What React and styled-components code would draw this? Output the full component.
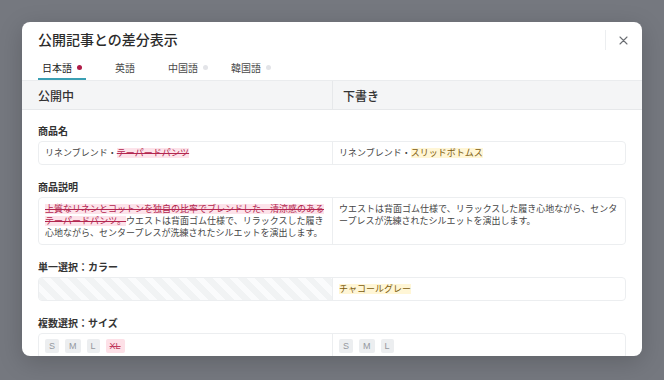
import React from 'react'
import styled, { createGlobalStyle } from 'styled-components'

const GlobalStyle = createGlobalStyle`
    html, body {
        margin: 0;
        width: 664px;
        height: 380px;
        overflow: hidden;
    }
    body {
        font-family: "Liberation Sans", "Noto Sans CJK JP", sans-serif;
        color: #333;
    }
    * {
        box-sizing: border-box;
    }
`

const Backdrop = styled.div`
    width: 664px;
    height: 380px;
    padding: 22px;
    background-color: #75787f;
`
const Dialog = styled.div`
    width: 620px;
    height: 334px;
    background-color: #fff;
    border-radius: 8px;
    display: flex;
    flex-direction: column;
    overflow: hidden;
    box-shadow: 0 6px 24px rgba(0, 0, 0, 0.18);
`
const DialogHead = styled.div`
    padding: 7px 8px 0 16px;
`
const TitleRow = styled.div`
    display: flex;
    align-items: center;
    height: 22px;
`
const Title = styled.h1`
    flex: 1;
    margin: 0;
    font-size: 14px;
    line-height: 20px;
    font-weight: 500;
    color: #2b2b2b;
`
const Separator = styled.div`
    width: 1px;
    height: 20px;
    background-color: #eceef0;
    margin-right: 6px;
`
const CloseButton = styled.button`
    width: 22px;
    height: 22px;
    padding: 0;
    border: 0;
    background: none;
    display: flex;
    align-items: center;
    justify-content: center;
    cursor: pointer;
`
const TabList = styled.div`
    display: flex;
    gap: 15px;
    margin-top: 4px;
    height: 25px;
`
const Tab = styled.div`
    width: 48px;
    display: flex;
    align-items: center;
    justify-content: center;
    gap: 5px;
    font-size: 10px;
    color: ${p => p.$active ? '#222' : '#4a4a4a'};
    border-bottom: 2px solid ${p => p.$active ? '#3a9fb3' : 'transparent'};
    padding-top: 1px;
`
const Dot = styled.span`
    width: 5px;
    height: 5px;
    border-radius: 50%;
    background-color: ${p => p.$color};
`
const ColumnHead = styled.div`
    display: grid;
    grid-template-columns: 1fr 1fr;
    padding: 0 16px;
    height: 30px;
    background-color: #f4f5f6;
    border-top: 1px solid #eaecee;
    border-bottom: 1px solid #e6e8ea;
`
const ColumnTitle = styled.div`
    display: flex;
    align-items: center;
    font-size: 12px;
    font-weight: 500;
    color: #333;
    & + & {
        border-left: 1px solid #e6e8ea;
        padding-left: 10px;
    }
`
const Body = styled.div`
    flex: 1;
    overflow: hidden;
    padding: 15px 16px;
`
const Section = styled.div`
    margin-bottom: 16px;
`
const Label = styled.div`
    font-size: 10px;
    line-height: 14px;
    font-weight: 600;
    color: #333;
    margin-bottom: 2px;
`
const DiffBox = styled.div`
    display: grid;
    grid-template-columns: 1fr 1fr;
    border: 1px solid #eceef0;
    border-radius: 4px;
    overflow: hidden;
`
const Cell = styled.div`
    padding: 5px 6px;
    font-size: 9px;
    line-height: 12px;
    color: #444;
    min-height: 22px;
    & + & {
        border-left: 1px solid #eceef0;
    }
    ${p => p.$empty && `
        background: repeating-linear-gradient(45deg, #f1f3f4 0 6px, #fafbfc 6px 12px);
    `}
`
const Del = styled.span`
    background-color: #fde3ea;
    color: #b3264f;
    text-decoration: line-through;
`
const Ins = styled.span`
    background-color: #fff6d6;
    color: #7c5a0b;
`
const Chips = styled.div`
    display: flex;
    gap: 6px;
`
const Chip = styled.span`
    height: 14px;
    padding: 0 4px;
    border-radius: 2px;
    display: inline-flex;
    align-items: center;
    font-size: 9px;
    background-color: ${p => p.$deleted ? '#fde0e7' : '#eceef0'};
    color: ${p => p.$deleted ? '#c0395d' : '#94989e'};
    text-decoration: ${p => p.$deleted ? 'line-through' : 'none'};
`

const tabs = [
    { name: '日本語', active: true, dot: '#b01c48' },
    { name: '英語' },
    { name: '中国語', dot: '#e3e4e8' },
    { name: '韓国語', dot: '#e3e4e8' },
]

const CloseIcon = () => (
    <svg width="9" height="9" viewBox="0 0 9 9">
        <path d="M1 1 L8 8 M8 1 L1 8" stroke="#6b6e73" strokeWidth="1.1" strokeLinecap="round" />
    </svg>
)

const SizeChips = ({ sizes, deleted = [] }) => (
    <Chips>
        {sizes.map(s => <Chip key={s} $deleted={deleted.includes(s)}>{s}</Chip>)}
    </Chips>
)

export default function App() {
    return (
        <>
            <GlobalStyle />
            <Backdrop>
                <Dialog>
                    <DialogHead>
                        <TitleRow>
                            <Title>公開記事との差分表示</Title>
                            <Separator />
                            <CloseButton aria-label="閉じる"><CloseIcon /></CloseButton>
                        </TitleRow>
                        <TabList>
                            {tabs.map(t => (
                                <Tab key={t.name} $active={t.active}>
                                    {t.name}
                                    {t.dot && <Dot $color={t.dot} />}
                                </Tab>
                            ))}
                        </TabList>
                    </DialogHead>
                    <ColumnHead>
                        <ColumnTitle>公開中</ColumnTitle>
                        <ColumnTitle>下書き</ColumnTitle>
                    </ColumnHead>
                    <Body>
                        <Section>
                            <Label>商品名</Label>
                            <DiffBox>
                                <Cell>リネンブレンド・<Del>テーパードパンツ</Del></Cell>
                                <Cell>リネンブレンド・<Ins>スリッドボトムス</Ins></Cell>
                            </DiffBox>
                        </Section>
                        <Section>
                            <Label>商品説明</Label>
                            <DiffBox>
                                <Cell>
                                    <Del>上質なリネンとコットンを独自の比率でブレンドした、清涼感のあるテーパードパンツ。</Del>
                                    ウエストは背面ゴム仕様で、リラックスした履き心地ながら、センタープレスが洗練されたシルエットを演出します。
                                </Cell>
                                <Cell>ウエストは背面ゴム仕様で、リラックスした履き心地ながら、センタープレスが洗練されたシルエットを演出します。</Cell>
                            </DiffBox>
                        </Section>
                        <Section>
                            <Label>単一選択：カラー</Label>
                            <DiffBox>
                                <Cell $empty />
                                <Cell><Ins>チャコールグレー</Ins></Cell>
                            </DiffBox>
                        </Section>
                        <Section>
                            <Label>複数選択：サイズ</Label>
                            <DiffBox>
                                <Cell><SizeChips sizes={['S', 'M', 'L', 'XL']} deleted={['XL']} /></Cell>
                                <Cell><SizeChips sizes={['S', 'M', 'L']} /></Cell>
                            </DiffBox>
                        </Section>
                    </Body>
                </Dialog>
            </Backdrop>
        </>
    )
}
